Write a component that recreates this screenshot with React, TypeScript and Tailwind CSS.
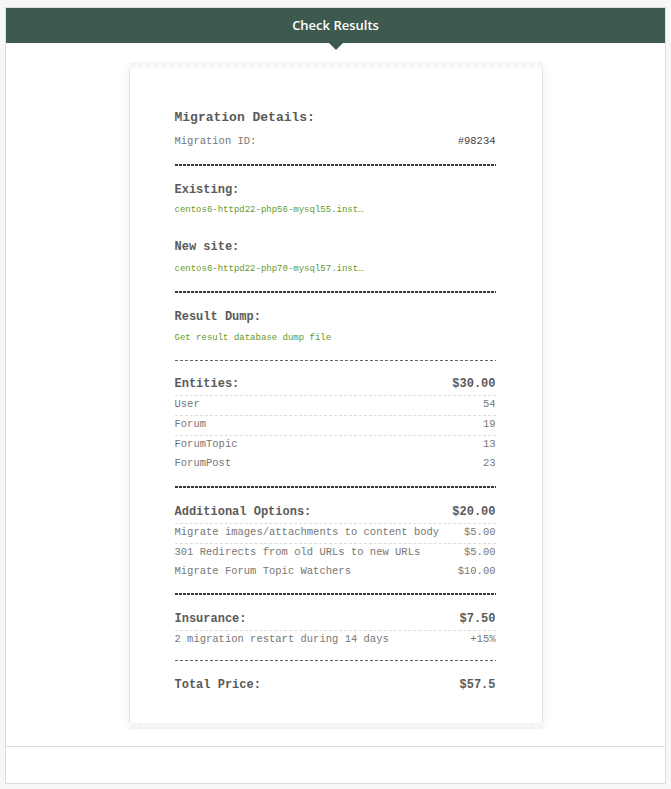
import React from "react";

type Row = { label: string; value: string; line?: boolean };

const entities: Row[] = [
  { label: "User", value: "54", line: true },
  { label: "Forum", value: "19", line: true },
  { label: "ForumTopic", value: "13" },
  { label: "ForumPost", value: "23" },
];

const options: Row[] = [
  { label: "Migrate images/attachments to content body", value: "$5.00", line: true },
  { label: "301 Redirects from old URLs to new URLs", value: "$5.00" },
  { label: "Migrate Forum Topic Watchers", value: "$10.00" },
];

const mono = { fontFamily: '"Liberation Mono", "DejaVu Sans Mono", monospace' };

function ThickDash({ top = "mt-[15px]" }: { top?: string }) {
  return (
    <div
      className={
        top +
        " mb-[16px] h-[2px] bg-[linear-gradient(to_right,#3a3a3a_75%,transparent_75%)] bg-[length:4px_2px] bg-repeat-x"
      }
    />
  );
}

function ThinDash({ top = "mt-[15px]", bottom = "mb-[15px]" }: { top?: string; bottom?: string }) {
  return (
    <div
      className={
        top +
        " " +
        bottom +
        " h-px bg-[linear-gradient(to_right,#666_70%,transparent_70%)] bg-[length:5px_1px] bg-repeat-x"
      }
    />
  );
}

function Jag({ up }: { up?: boolean }) {
  const id = up ? "jag-up" : "jag-down";
  return (
    <svg width="100%" height="6" className="block">
      <defs>
        <pattern id={id} width="8" height="6" patternUnits="userSpaceOnUse">
          {up ? (
            <polygon points="0,6 4,0 8,6" fill="#f2f2f2" />
          ) : (
            <polygon points="0,0 8,0 4,6" fill="#f4f4f4" />
          )}
        </pattern>
      </defs>
      <rect width="100%" height="6" fill={`url(#${id})`} />
    </svg>
  );
}

function HeadRow({ label, value }: { label: string; value: string }) {
  return (
    <div className="flex justify-between text-[12px] leading-[16px] font-bold text-[#5a5a5a] pb-[3px] border-b border-dashed border-[#ddd]">
      <span>{label}</span>
      <span>{value}</span>
    </div>
  );
}

function ItemRow({ row }: { row: Row }) {
  return (
    <div
      className={
        "flex justify-between text-[10.5px] leading-[16px] text-[#777] pb-[3px] " +
        (row.line ? "border-b border-dashed border-[#ddd]" : "")
      }
    >
      <span>{row.label}</span>
      <span>{row.value}</span>
    </div>
  );
}

export default function App() {
  return (
    <div className="min-h-[789px] bg-[#f7f7f7] pt-[7px] px-[5px]">
      <div className="bg-white border border-[#dcdcdc]">
        <div
          className="h-[35px] bg-[#3d5a4e] flex items-center justify-center text-white text-[13px] font-semibold relative"
          style={{ fontFamily: '"Open Sans", sans-serif' }}
        >
          Check Results
          <div className="absolute left-1/2 -translate-x-1/2 top-full w-0 h-0 border-x-[7px] border-x-transparent border-t-[7px] border-t-[#3d5a4e]" />
        </div>

        <div className="pt-[19px] pb-[17px] flex justify-center">
          <div className="w-[414px]">
            <Jag />
            <div
              className="bg-white border-x border-[#e2e2e2] shadow-[0_2px_10px_rgba(0,0,0,0.08)] pl-[45px] pr-[46px] pt-[41px] pb-[30px]"
              style={mono}
            >
              <div className="text-[13px] leading-[18px] font-bold text-[#5a5a5a]">Migration Details:</div>
              <div className="mt-[6px] flex justify-between text-[10.5px] leading-[16px]">
                <span className="text-[#777]">Migration ID:</span>
                <span className="text-[#444]">#98234</span>
              </div>

              <ThickDash />

              <div className="text-[12px] leading-[16px] font-bold text-[#5a5a5a]">Existing:</div>
              <div className="mt-[4px] w-[194px] truncate text-[9px] leading-[16px] text-[#5f9a2e]">
                centos6-httpd22-php56-mysql55.instance.example.com
              </div>
              <div className="mt-[21px] text-[12px] leading-[16px] font-bold text-[#5a5a5a]">New site:</div>
              <div className="mt-[6px] w-[194px] truncate text-[9px] leading-[16px] text-[#5f9a2e]">
                centos6-httpd22-php70-mysql57.instance.example.com
              </div>

              <ThickDash top="mt-[14px]" />

              <div className="text-[12px] leading-[16px] font-bold text-[#5a5a5a]">Result Dump:</div>
              <div className="mt-[5px] text-[9px] leading-[16px] text-[#5f9a2e]">Get result database dump file</div>

              <ThinDash top="mt-[14px]" />

              <HeadRow label="Entities:" value="$30.00" />
              {entities.map((r) => (
                <ItemRow key={r.label} row={r} />
              ))}

              <ThickDash top="mt-[12px]" />

              <HeadRow label="Additional Options:" value="$20.00" />
              {options.map((r) => (
                <ItemRow key={r.label} row={r} />
              ))}

              <ThickDash top="mt-[11px]" />

              <HeadRow label="Insurance:" value="$7.50" />
              <ItemRow row={{ label: "2 migration restart during 14 days", value: "+15%" }} />

              <ThinDash top="mt-[10px]" bottom="mb-[16px]" />

              <div className="mt-px flex justify-between text-[12px] leading-[16px] font-bold text-[#5a5a5a]">
                <span>Total Price:</span>
                <span>$57.5</span>
              </div>
            </div>
            <Jag up />
          </div>
        </div>

        <div className="h-[37px] border-t border-[#dcdcdc]" />
      </div>
    </div>
  );
}
